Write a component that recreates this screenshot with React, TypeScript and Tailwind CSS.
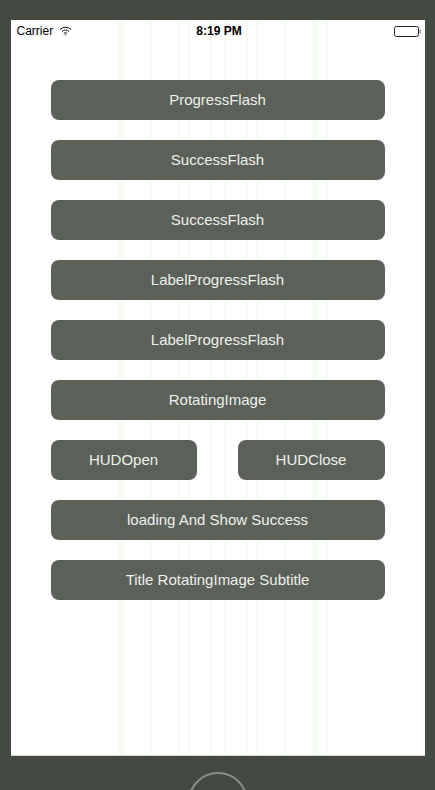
import React from "react";

const lines: [number, number][] = [
  [107, 6],
  [139, 2],
  [167, 2],
  [177, 2],
  [199, 2],
  [213, 2],
  [235, 2],
  [245, 2],
  [273, 2],
  [301, 6],
  [315, 2],
];

function Btn({ label, className = "" }: { label: string; className?: string }) {
  return (
    <div
      className={
        "h-10 pt-[1px] rounded-lg bg-[#5b6058] text-[#eef0ec] text-[15px] flex items-center justify-center " +
        className
      }
    >
      {label}
    </div>
  );
}

export default function App() {
  return (
    <div
      className="w-[435px] h-[790px] bg-[#444a41] flex flex-col items-center overflow-hidden"
      style={{ fontFamily: '"Liberation Sans", Arial, sans-serif' }}
    >
      <div className="mt-5 w-[414px] h-[736px] shrink-0 bg-white relative border-b border-[#d6dad3]">
        <div className="absolute inset-0 pointer-events-none">
          {lines.map(([l, w], i) => (
            <div
              key={i}
              className="absolute top-0 bottom-0 bg-[#f6fbf3]"
              style={{ left: l, width: w }}
            />
          ))}
        </div>
        <div className="relative flex flex-col">
          <div className="h-5 pt-[2px] flex items-center pl-[6px] pr-[3px] text-[12px] text-black">
            <div className="flex-1 flex items-center gap-[6px]">
              <span>Carrier</span>
              <svg width="13" height="10" viewBox="0 0 13 10">
                <path d="M1 3.5 A8 8 0 0 1 12 3.5" fill="none" stroke="#111" strokeWidth="1" />
                <path d="M3 5.5 A5 5 0 0 1 10 5.5" fill="none" stroke="#111" strokeWidth="1" />
                <path d="M4.8 7.3 A2.6 2.6 0 0 1 8.2 7.3" fill="none" stroke="#111" strokeWidth="1" />
                <path d="M6.5 9.5 L5.5 8.3 L7.5 8.3 Z" fill="#111" />
              </svg>
            </div>
            <span className="font-semibold">8:19 PM</span>
            <div className="flex-1 flex justify-end items-center">
              <svg width="28" height="11" viewBox="0 0 28 11">
                <rect x="0.5" y="0.5" width="24" height="10" rx="2" fill="none" stroke="#222" strokeWidth="1" />
                <rect x="25.5" y="3.5" width="1.5" height="4" fill="#999" />
              </svg>
            </div>
          </div>
          <div className="px-10 pt-10 flex flex-col gap-5">
            <Btn label="ProgressFlash" />
            <Btn label="SuccessFlash" />
            <Btn label="SuccessFlash" />
            <Btn label="LabelProgressFlash" />
            <Btn label="LabelProgressFlash" />
            <Btn label="RotatingImage" />
            <div className="flex justify-between">
              <Btn label="HUDOpen" className="w-[146px]" />
              <Btn label="HUDClose" className="w-[147px]" />
            </div>
            <Btn label="loading And Show Success" />
            <Btn label="Title RotatingImage Subtitle" />
          </div>
        </div>
      </div>
      <div className="mt-[16px] w-[60px] h-[60px] rounded-full border-2 border-[#8b8f88] shrink-0" />
    </div>
  );
}
